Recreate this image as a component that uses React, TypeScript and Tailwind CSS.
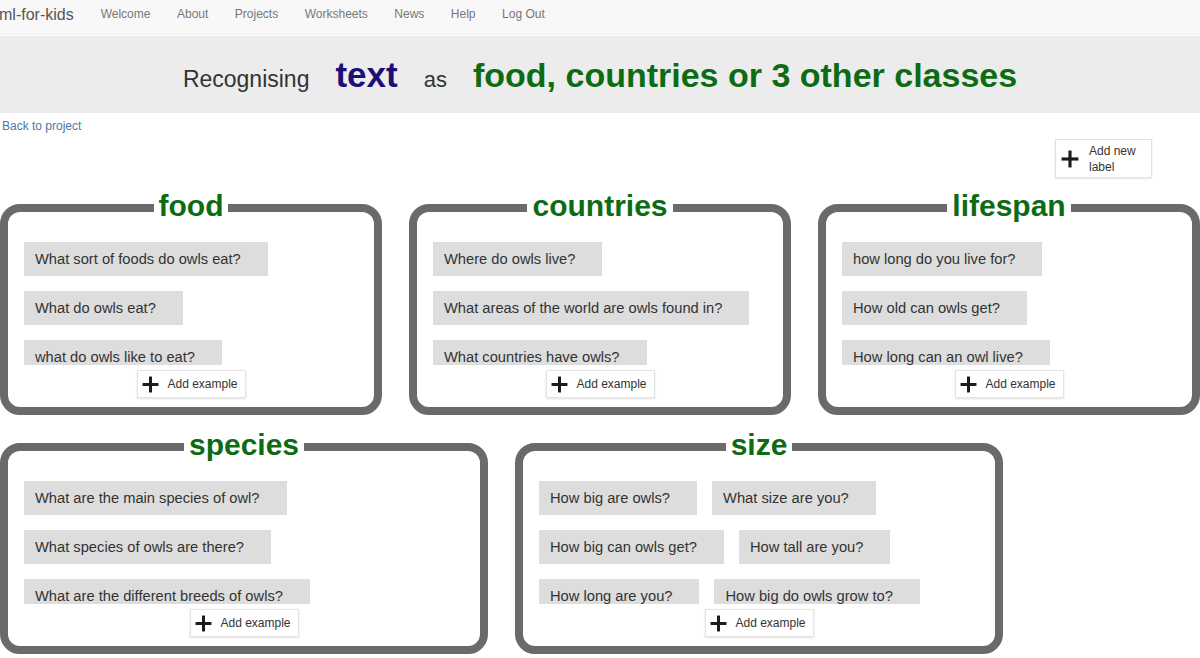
const labels: { name: string; wide: boolean; items: string[] }[] = [
  {
    name: "food",
    wide: false,
    items: ["What sort of foods do owls eat?", "What do owls eat?", "what do owls like to eat?"],
  },
  {
    name: "countries",
    wide: false,
    items: ["Where do owls live?", "What areas of the world are owls found in?", "What countries have owls?"],
  },
  {
    name: "lifespan",
    wide: false,
    items: ["how long do you live for?", "How old can owls get?", "How long can an owl live?"],
  },
  {
    name: "species",
    wide: true,
    items: [
      "What are the main species of owl?",
      "What species of owls are there?",
      "What are the different breeds of owls?",
    ],
  },
  {
    name: "size",
    wide: true,
    items: [
      "How big are owls?",
      "What size are you?",
      "How big can owls get?",
      "How tall are you?",
      "How long are you?",
      "How big do owls grow to?",
    ],
  },
];

const nav = ["Welcome", "About", "Projects", "Worksheets", "News", "Help", "Log Out"];

function Plus({ size }: { size: number }) {
  return (
    <svg width={size} height={size} viewBox="0 0 16 16" className="shrink-0">
      <rect x="6.6" y="0.5" width="2.8" height="15" fill="#1c1c1c" />
      <rect x="0.5" y="6.6" width="15" height="2.8" fill="#1c1c1c" />
    </svg>
  );
}

function LabelBox({ name, wide, items }: { name: string; wide: boolean; items: string[] }) {
  return (
    <div
      className={`relative ${wide ? "w-[488px]" : "w-[382px]"} h-[211px] border-[8px] border-[#6a6a6a] rounded-[20px] bg-white flex flex-col`}
    >
      <div className="absolute -top-[21px] left-0 right-0 flex justify-center">
        <span className="bg-white px-[5px] text-[30px] leading-[30px] font-bold text-[#0d6b14]">{name}</span>
      </div>
      <div className="mt-[19px] h-[134px] overflow-hidden pt-[11px] px-[16px] flex flex-wrap content-start gap-[15px]">
        {items.map((t) => (
          <div
            key={t}
            className="h-[34px] flex items-center bg-[#dddddd] pl-[11px] pr-[27px] text-[14.7px] text-[#333]"
          >
            {t}
          </div>
        ))}
      </div>
      <div className="mt-[5px] flex justify-center">
        <button className="h-[28px] w-[109px] flex items-center gap-[9px] pl-[4px] bg-white border border-[#e4e4e4] shadow-[0_1px_2px_rgba(0,0,0,0.12)] text-[12px] text-[#333]">
          <Plus size={17} />
          <span>Add example</span>
        </button>
      </div>
    </div>
  );
}

export default function App() {
  return (
    <div className="w-[1200px] h-[658px] overflow-hidden bg-white font-['Liberation_Sans',Arial,sans-serif]">
      <div className="h-[35px] bg-[#f8f8f8] flex items-center border-b border-[#f1f1f1]">
        <span className="text-[16px] text-[#555] -ml-[1px] pb-[5px]">ml-for-kids</span>
        <div className="flex ml-[27px] gap-[26.5px] pb-[6px]">
          {nav.map((n) => (
            <span key={n} className="text-[12px] text-[#777]">
              {n}
            </span>
          ))}
        </div>
      </div>
      <div className="h-[77px] mt-[1px] bg-[#ececec] flex items-center justify-center">
        <div className="flex items-baseline gap-[26px] pt-[1px]">
          <span className="text-[23px] text-[#333]">Recognising</span>
          <span className="text-[35px] font-bold text-[#1c0f78]">text</span>
          <span className="text-[22px] text-[#333]">as</span>
          <span className="text-[34px] font-bold text-[#0d6b14]">food, countries or 3 other classes</span>
        </div>
      </div>
      <div className="pl-[2px] pt-[6px] text-[12px] text-[#4a79ad] leading-[14px]">Back to project</div>
      <div className="flex justify-end pr-[48px] mt-[6px]">
        <button className="w-[97px] h-[39px] flex items-center pl-[5px] gap-[10px] bg-white border border-[#e2e2e2] shadow-[0_1px_2px_rgba(0,0,0,0.1)] text-left">
          <Plus size={18} />
          <span className="text-[12px] leading-[16px] text-[#333]">
            Add new
            <br />
            label
          </span>
        </button>
      </div>
      <div className="mt-[26px] flex flex-wrap gap-x-[27px] gap-y-[28px]">
        {labels.map((l) => (
          <LabelBox key={l.name} {...l} />
        ))}
      </div>
    </div>
  );
}
